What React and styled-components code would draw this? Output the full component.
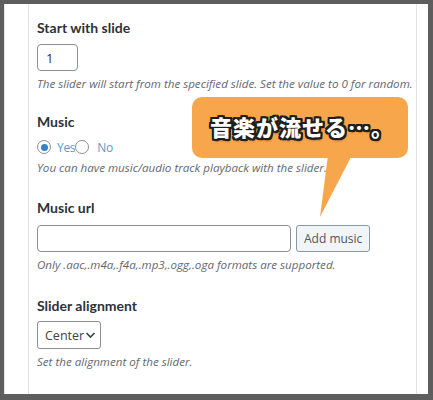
import React from "react";
import styled, { createGlobalStyle } from "styled-components";

const Global = createGlobalStyle`
  html, body { margin: 0; padding: 0; background: #5e5e5e; }
  #root { width: 433px; height: 400px; }
`;

const Frame = styled.div`
  width: 433px;
  height: 400px;
  box-sizing: border-box;
  padding: 4px 5px 6px 4px;
`;

const Sheet = styled.div`
  position: relative;
  height: 100%;
  background: #ffffff;
  border-left: 1px solid #e6e6e6;
  padding-left: 23px;
  box-sizing: border-box;
  overflow: hidden;
`;

const Card = styled.div`
  width: 389px;
  height: 100%;
  box-sizing: border-box;
  border-left: 1px solid #e3e3e3;
  border-right: 1px solid #e3e3e3;
  padding: 15px 0 0 8px;
  display: flex;
  flex-direction: column;
`;

const Field = styled.div`
  display: flex;
  flex-direction: column;
  align-items: flex-start;
  margin-bottom: ${(p) => p.$gap || 26}px;
`;

const Label = styled.div`
  font-family: Lato, "Open Sans", sans-serif;
  font-weight: 700;
  font-size: 14px;
  line-height: 18px;
  color: #2c3338;
  margin-bottom: ${(p) => p.$mb || 8}px;
`;

const Desc = styled.div`
  font-family: "Open Sans", sans-serif;
  font-style: italic;
  font-size: 11.6px;
  line-height: 16px;
  color: #646970;
  margin-top: 5px;
`;

const TextInput = styled.div`
  box-sizing: border-box;
  width: ${(p) => p.$w}px;
  height: ${(p) => p.$h}px;
  border: 1px solid #8c8f94;
  border-radius: 4px;
  background: #fff;
  font-family: "Open Sans", sans-serif;
  font-size: 13px;
  color: #2c3338;
  display: flex;
  align-items: center;
  padding-left: 8px;
`;

const Row = styled.div`
  display: flex;
  align-items: center;
  gap: ${(p) => p.$gap || 5}px;
`;

const RadioGroup = styled.div`
  display: flex;
  align-items: center;
  height: 16px;
  margin-top: 2px;
`;

const RadioCircle = styled.span`
  box-sizing: border-box;
  width: 14px;
  height: 14px;
  border-radius: 50%;
  border: 1px solid #8c8f94;
  background: #fff;
  display: inline-flex;
  align-items: center;
  justify-content: center;
  &::after {
    content: "";
    width: 7px;
    height: 7px;
    border-radius: 50%;
    background: ${(p) => (p.$checked ? "#3582c4" : "transparent")};
  }
`;

const RadioText = styled.span`
  font-family: "Open Sans", sans-serif;
  font-size: 12px;
  color: #5b9bc9;
  margin: 0 ${(p) => p.$mr || 0}px 0 ${(p) => p.$ml || 6}px;
  letter-spacing: -0.3px;
`;

const Button = styled.div`
  box-sizing: border-box;
  height: 27px;
  padding: 0 7px;
  border: 1px solid #8a97a3;
  border-radius: 3px;
  background: #f1f5f8;
  color: #50575e;
  font-family: "Open Sans", sans-serif;
  font-size: 12px;
  display: flex;
  align-items: center;
`;

const Select = styled.div`
  box-sizing: border-box;
  width: 64px;
  height: 28px;
  border: 1px solid #8c8f94;
  border-radius: 3px;
  background: #fff;
  display: flex;
  align-items: center;
  padding-left: 7px;
  gap: 1px;
  font-family: "Open Sans", sans-serif;
  font-size: 12.5px;
  color: #3c434a;
`;

const Callout = styled.div`
  position: absolute;
  left: 187px;
  top: 93px;
  width: 216px;
  height: 61px;
  background: #f8a64c;
  border-radius: 10px;
  display: flex;
  align-items: center;
  justify-content: center;
`;

const Tail = styled.svg`
  position: absolute;
  left: 128px;
  top: 58px;
  overflow: visible;
`;

const CalloutText = styled.span`
  position: relative;
  font-family: "Noto Sans CJK JP", sans-serif;
  font-weight: 900;
  font-size: 22px;
  letter-spacing: 1px;
  color: #ffffff;
  text-shadow:
    -2px -2px 0 #1e1e1e, 2px -2px 0 #1e1e1e, -2px 2px 0 #1e1e1e, 2px 2px 0 #1e1e1e,
    0 -2px 0 #1e1e1e, 0 2px 0 #1e1e1e, -2px 0 0 #1e1e1e, 2px 0 0 #1e1e1e,
    -1px -2px 0 #1e1e1e, 1px 2px 0 #1e1e1e, -2px 1px 0 #1e1e1e, 2px -1px 0 #1e1e1e,
    1px 3px 2px rgba(0,0,0,0.35);
  margin-top: -3px;
  margin-left: 4px;
`;

function Chevron() {
  return (
    <svg width="11" height="8" viewBox="0 0 11 8">
      <path d="M1.5 2 L5.5 6 L9.5 2" fill="none" stroke="#3c434a" strokeWidth="1.6" />
    </svg>
  );
}

export default function App() {
  return (
    <>
      <Global />
      <Frame>
        <Sheet>
          <Card>
            <Field $gap={21}>
              <Label $mb={7}>Start with slide</Label>
              <TextInput $w={41} $h={27}>1</TextInput>
              <Desc>The slider will start from the specified slide. Set the value to 0 for random.</Desc>
            </Field>
            <Field $gap={23}>
              <Label $mb={6}>Music</Label>
              <RadioGroup>
                <RadioCircle $checked />
                <RadioText $ml={6}>Yes</RadioText>
                <RadioCircle />
                <RadioText $ml={8}>No</RadioText>
              </RadioGroup>
              <Desc>You can have music/audio track playback with the slider.</Desc>
            </Field>
            <Field $gap={24}>
              <Label $mb={8}>Music url</Label>
              <Row $gap={5}>
                <TextInput $w={254} $h={27} />
                <Button>Add music</Button>
              </Row>
              <Desc>Only .aac,.m4a,.f4a,.mp3,.ogg,.oga formats are supported.</Desc>
            </Field>
            <Field>
              <Label $mb={6}>Slider alignment</Label>
              <Select>
                Center
                <Chevron />
              </Select>
              <Desc>Set the alignment of the slider.</Desc>
            </Field>
          </Card>
          <Callout>
            <Tail width="32" height="64" viewBox="0 0 32 64">
              <polygon points="8,0 32,0 0,62" fill="#f8a64c" />
            </Tail>
            <CalloutText>音楽が流せる…。</CalloutText>
          </Callout>
        </Sheet>
      </Frame>
    </>
  );
}
